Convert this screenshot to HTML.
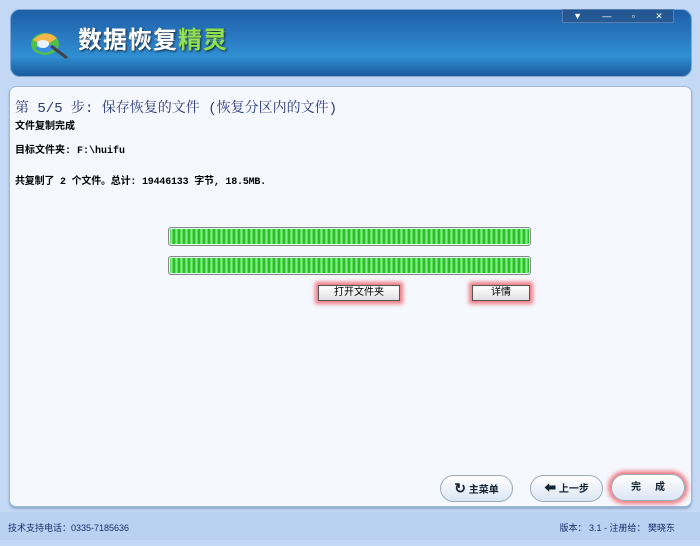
<!DOCTYPE html>
<html><head><meta charset="utf-8"><style>
*{margin:0;padding:0;box-sizing:border-box}
body{width:700px;height:546px;overflow:hidden;background:#c3d8f4;font-family:"Liberation Sans","Noto Sans CJK SC",sans-serif;position:relative}
.abs{position:absolute}
#hdr{left:10px;top:9px;width:682px;height:68px;border-radius:10px;background:linear-gradient(180deg,#1d5fa6 0%,#2b7cc4 45%,#2f8fd2 70%,#1a5a9c 100%);border:1px solid #7fa6d6;overflow:hidden}
#title{left:78px;top:20px;font-size:24px;font-weight:bold;color:#fff;letter-spacing:1px;text-shadow:1px 1px 2px #123}
#title span{color:#8fe04a}
#refl{left:78px;top:46px;font-size:24px;font-weight:bold;color:rgba(255,255,255,.35);transform:scaleY(-0.5);transform-origin:top;letter-spacing:1px}
#ctl{left:562px;top:9px;width:112px;height:14px;background:rgba(40,80,130,.6);border:1px solid #5a7fae;color:#fff;font-size:9px;display:flex;justify-content:space-around;align-items:center}
#main{left:9px;top:86px;width:683px;height:421px;background:#f5f8fe;border:1px solid #9cb8dd;border-radius:7px;box-shadow:0 2px 2px #8fa9cc}
.t{position:absolute;font-family:"Liberation Mono","Noto Sans CJK SC",monospace;color:#000;font-weight:bold;font-size:10px}
.bar{position:absolute;left:168px;width:363px;height:19px;border:1px solid #888;border-radius:3px;background:#2fc42f;background-image:repeating-linear-gradient(90deg,#1aa81a 0,#5fe05f 1.5px,#8ff58f 2.5px,#3cd03c 4px,#1aa81a 5px);box-shadow:inset 0 0 0 1px #dfe;}
.sb{position:absolute;height:16px;border:1px solid #555;background:linear-gradient(#fff,#e0e0e0);font-size:10px;text-align:center;line-height:14px;box-shadow:0 0 4px 3px #f07a80}
.rb{position:absolute;height:27px;border:1px solid #9ab;border-radius:14px;background:linear-gradient(#fff,#dbe6f3);font-size:10px;font-weight:bold;line-height:25px;text-align:center;color:#123}
#foot{left:0;top:512px;width:700px;height:28px;background:#b9d2f2;font-size:9px;color:#1a2c6a}
</style></head><body>
<div id="hdr" class="abs">
 <svg class="abs" style="left:16px;top:16px" width="46" height="36"><ellipse cx="18" cy="18" rx="14" ry="11" fill="#4fc04a"/><path d="M6 14 Q18 2 30 12 L18 20Z" fill="#f4b54a"/><path d="M8 22 Q18 32 30 20 L18 18Z" fill="#3a8ee8"/><ellipse cx="16" cy="18" rx="6" ry="4" fill="#e8f3ff"/><line x1="24" y1="20" x2="40" y2="32" stroke="#444" stroke-width="3"/></svg>
</div>
<div id="title" class="abs">数据恢复<span>精灵</span></div>
<div id="refl" class="abs">数据恢复<span style="color:rgba(160,230,110,.35)">精灵</span></div>
<div id="ctl" class="abs"><span>▼</span><span>—</span><span>▫</span><span>✕</span></div>
<div id="main" class="abs"></div>
<div class="t" style="left:15px;top:97px;font-size:14px;font-weight:normal;color:#2a3a7a;font-family:'Liberation Mono','Noto Serif CJK SC',monospace">第 5/5 步: 保存恢复的文件 (恢复分区内的文件)</div>
<div class="t" style="left:15px;top:117px">文件复制完成</div>
<div class="t" style="left:15px;top:141px">目标文件夹: F:\huifu</div>
<div class="t" style="left:15px;top:172px;letter-spacing:-0.2px">共复制了 2 个文件。总计: 19446133 字节, 18.5MB.</div>
<div class="bar" style="top:227px"></div>
<div class="bar" style="top:256px"></div>
<div class="sb" style="left:318px;top:285px;width:82px">打开文件夹</div>
<div class="sb" style="left:472px;top:285px;width:58px">详情</div>
<div class="rb" style="left:440px;top:475px;width:73px"><span style="font-size:14px">↻</span> 主菜单</div>
<div class="rb" style="left:530px;top:475px;width:73px"><span style="font-size:12px">⬅</span> 上一步</div>
<div class="rb" style="left:611px;top:474px;width:74px;box-shadow:0 0 4px 3px #f07a80">完&nbsp;&nbsp;&nbsp;&nbsp;&nbsp;成</div>
<div id="foot" class="abs"><span class="abs" style="left:8px;top:9px">技术支持电话：0335-7185636</span><span class="abs" style="right:25px;top:9px">版本： 3.1 - 注册给： 樊晓东</span></div>
</body></html>
